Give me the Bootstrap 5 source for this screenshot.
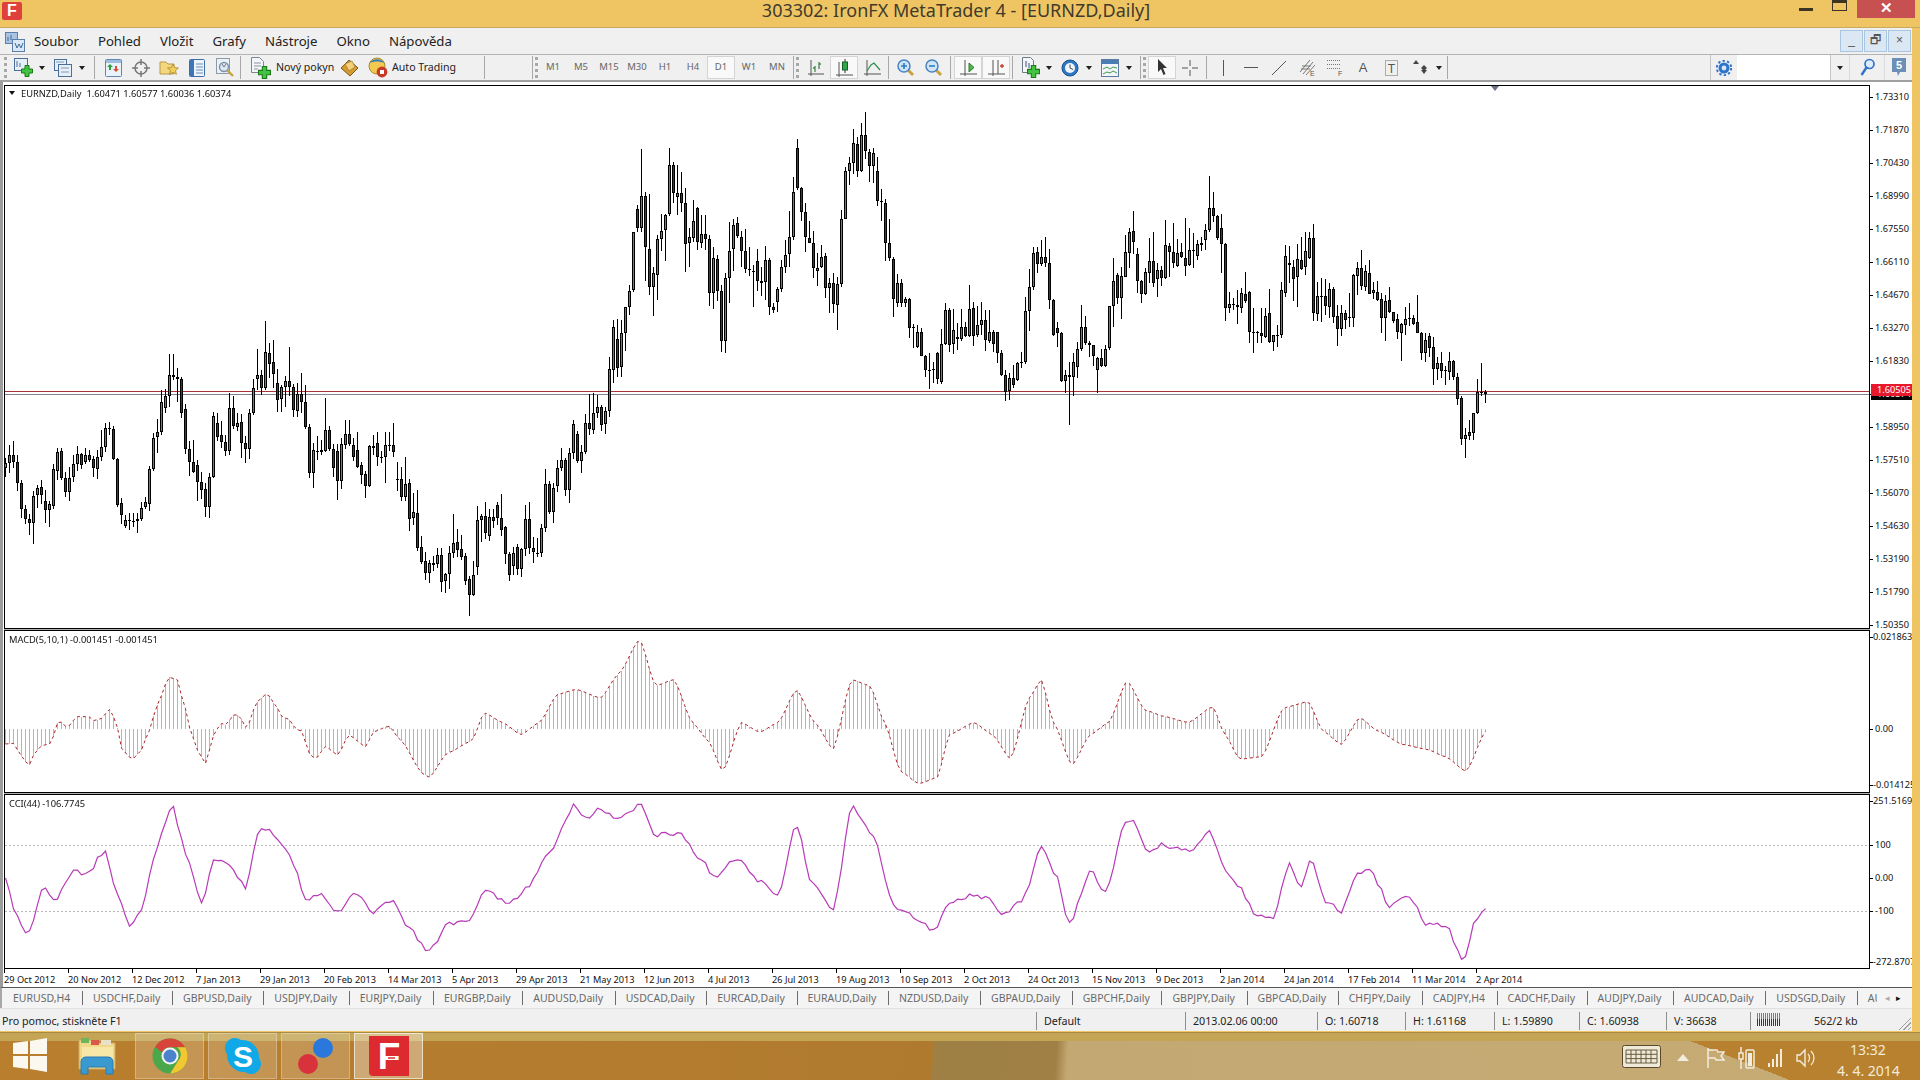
<!DOCTYPE html>
<html lang="cs">
<head>
  <meta charset="UTF-8">
  <title>303302: IronFX MetaTrader 4 - [EURNZD,Daily]</title>
  <link rel="stylesheet" href="https://cdn.jsdelivr.net/npm/bootstrap@5.3.0/dist/css/bootstrap.min.css">
  <style>
    html, body { width: 1920px; height: 1080px; overflow: hidden; }
    body { margin: 0; background: #efc564; font-family: "Noto Sans", "Liberation Sans", sans-serif; color: #222; position: relative; }
    .app { width: 1912px; }
    .ms-px { margin-left: 1px !important; }
    .ms-2px { margin-left: 2px !important; }
    .ms-3px { margin-left: 3px !important; }
    .ms-14 { margin-left: 14px !important; }
    .ms-47 { margin-left: 47px !important; }

    .titlebar { height: 28px; width: 1920px; background: #efc564; border-bottom: 1px solid #c9a860; }
    .title-text { font-size: 18px; line-height: 21px; color: #403a2c; width: 1912px; text-align: center; }
    .app-icon { width: 20px; height: 18px; left: 2px; top: 2px; background: #e0403c; border-radius: 2px; color: #fff; font: bold 16px/18px "Liberation Sans", sans-serif; text-align: center; }
    .win-btns { top: 0; right: 5px; }
    .win-min { width: 14px; height: 3px; background: #3d3424; margin: 8px 19px 0 0; }
    .win-max { width: 15px; height: 11px; border: 1.5px solid #3d3424; border-top-width: 3px; margin-right: 10px; }
    .win-close { width: 58px; height: 18px; background: #c75050; color: #fff; font: bold 15px/15px "Liberation Sans", sans-serif; text-align: center; }

    .menubar { height: 27px; background: #f0f0f0; border-bottom: 1px solid #b4b4b4; }
    .mdi-icon { margin: 0 9px 0 5px; }
    .menubar .nav-link { font-size: 13.2px; line-height: 26px; padding: 0; color: #222; }
    .menubar .nav-item { margin-right: 19px; }
    .mdi-btn { width: 23px; height: 22px; margin: 2px 1px 0 0; background: #dbe7f3; border: 1px solid #a9c5df; color: #555; font: 12px/19px "Liberation Sans", sans-serif; text-align: center; }

    .toolbar { height: 27px; background: #f0f0f0; border-bottom: 2px solid #a0a0a0; }
    .grip { width: 4px; height: 21px; margin: 2px 0 0; border-left: 3px dotted #a8a8a8; flex: none; }
    .sep { width: 1px; height: 23px; margin-top: 1px; background: #a8a8a8; flex: none; }
    .tb { width: 28px; height: 25px; flex: none; display: flex; align-items: center; justify-content: center; font-size: 9.5px; color: #666; }
    .tb.on { background: #f9f9f9; border: 1px solid #d4d4d4; height: 23px; margin-top: 1px; }
    .tb.w40 { width: 40px; justify-content: flex-start; padding-left: 4px; }
    .tb.w42 { width: 42px; justify-content: flex-start; padding-left: 7px; }
    .caret { width: 0; height: 0; border: 3px solid transparent; border-top: 4px solid #222; border-bottom: 0; margin-left: auto; margin-right: 5px; }
    .tb-text { font-size: 10.6px; color: #222; white-space: nowrap; }
    .tb.wo { width: 90px; justify-content: flex-start; padding-left: 5px; gap: 5px; }
    .tb.wa { width: 107px; justify-content: flex-start; padding-left: 5px; gap: 3px; }
    .tool-a { font: 13px "Liberation Sans", sans-serif; color: #555; }
    .search-group { margin-left: auto; }
    .gear { width: 27px; height: 25px; border-left: 1px solid #c4c4c4; display: flex; align-items: center; justify-content: center; }
    .search-group .form-control { width: 93px; height: 25px; padding: 0; border: 0; border-radius: 0; background: #fff; }
    .combo { width: 20px; height: 25px; border-left: 1px solid #c4c4c4; border-right: 1px solid #dcdcdc; display: flex; align-items: center; justify-content: center; }
    .combo .caret { margin: 0; }
    .ms-sb { width: 35px; height: 25px; display: flex; align-items: center; justify-content: center; border-right: 1px solid #dcdcdc; }
    .search-group .tb { width: 27px; }

    .chart-wrap { background: #fff; border-left: 3px solid #9c9c9c; padding-top: 3px; }
    .pane { margin-left: 1px; }
    .plot { width: 1866px; border: 1px solid #000; position: relative; flex: none; }
    .plot canvas { display: block; }
    .pane-gap { height: 1px; background: #b0b0b0; width: 1866px; margin-left: 1px; }
    .h-main { height: 544px; }
    .h-macd { height: 163px; }
    .h-cci { height: 175px; }
    .chart-label { position: absolute; left: 16px; top: 1px; font-size: 9.3px; line-height: 13px; white-space: pre; color: #111; }
    .chart-label.label-ind { left: 4px; top: 2px; }
    .chart-arrow { position: absolute; left: 4px; top: 5px; border: 3.5px solid transparent; border-top: 4px solid #111; border-bottom: 0; }
    .shift-mark { position: absolute; left: 1486px; top: 0; border: 4px solid transparent; border-top: 5px solid #6b7280; border-bottom: 0; }
    .axis { width: 42px; flex: none; font-size: 9.2px; line-height: 14px; color: #111; white-space: nowrap; overflow: hidden; position: relative; }
    .axis-main { padding-top: 5px; }
    .axis div { padding-left: 5px; background: linear-gradient(#000, #000) left 7px / 3px 1px no-repeat; }
    .axis .tight { padding-left: 3px; }
    .pl { height: 33px; }
    .r92 { height: 92px; } .r56 { height: 56px; }
    .r44 { height: 44px; } .r33 { height: 33px; } .r51 { height: 51px; } .r14 { height: 14px; }
    .price-tag { position: absolute; left: 1px; width: 41px; font-size: 9.2px; line-height: 12px; }
    .axis .tag-black { padding-left: 6px; top: 303px; height: 12px; background: #000; color: #fff; }
    .axis .tag-red { padding-left: 6px; top: 299px; height: 12px; line-height: 12px; background: #e8192c; color: #fff; }

    .dates { height: 18px; font-size: 9.2px; line-height: 17px; color: #111; padding-left: 1px; width: 1909px; }
    .dates span { width: 64px; flex: none; white-space: nowrap; padding-top: 2px; background: linear-gradient(#000, #000) left top / 1px 4px no-repeat; }

    .tabs { height: 21px; background: #f4f4f4; border-top: 1px solid #555; border-left: 2px solid #a8a8a8; overflow: hidden; }
    .tabs .nav-link { padding: 0 11.6px 0 10px; font-size: 10.5px; line-height: 14px; margin-top: 3px; color: #6a6a6a; border-left: 1px solid #6c6c6c; white-space: nowrap; }
    .tabs .nav-item:first-child .nav-link { border-left: 0; padding-left: 11px; }
    .nav-tabs-clip { width: 1875px; flex: none; flex-wrap: nowrap; overflow: hidden; }
    .tab-arrows { margin-left: 8px; flex: none; font-size: 9px; line-height: 19px; color: #aaa; }
    .tab-arrows b { color: #111; margin-left: 6px; font-weight: normal; }

    .statusbar { height: 23px; background: #f0f0f0; font-size: 10.7px; line-height: 23px; color: #222; border-top: 1px solid #e0e0e0; }
    .statusbar > div { padding-left: 7px; border-right: 1px solid #8e8e8e; height: 18px; line-height: 18px; margin-top: 3px; flex: none; white-space: nowrap; }
    .statusbar > .st1 { width: 1037px; padding-left: 2px; }
    .st2 { width: 149px; } .st3 { width: 132px; } .st4 { width: 88px; } .st5 { width: 89px; }
    .st6 { width: 85px; } .st7 { width: 87px; } .st8 { width: 84px; }
    .statusbar > .st9 { width: 160px; border-right: 0; position: relative; }
    .conn-bars { position: absolute; left: 6px; top: 1px; width: 24px; height: 13px; background: repeating-linear-gradient(90deg, transparent 0 1px, #f0f0f0 1px 2px), linear-gradient(#7f8f20 0 50%, #12407a 50%); }
    .mem { position: absolute; left: 63px; top: 0; }
    .grip-corner { position: absolute; right: 0; bottom: 0; width: 14px; height: 14px; background: repeating-linear-gradient(135deg, transparent 0 2px, #a0a0a0 2px 3px); clip-path: polygon(100% 0, 100% 100%, 0 100%); }

    .taskbar { position: absolute; left: 0; top: 1032px; width: 1920px; height: 48px;
      background:
        linear-gradient(#c4a455 0 8px, transparent 8px),
        linear-gradient(21.4deg, transparent 653px, #b8812f 653px),
        linear-gradient(94deg, #b97f2e 0, #b07a2e 48.6%, #9e7f44 48.6%, #a08044 55%, #c3a873 55.6%, #c7ab74 100%);
      border-top: 1px solid #a88a40; }
    .start { width: 62px; height: 47px; padding-left: 13px; padding-top: 5px; }
    .tbtn { width: 69px; height: 46px; margin-right: 4px; display: flex; align-items: center; justify-content: center; }
    .tbtn.open { background: rgba(255,255,255,.18); border: 1px solid rgba(255,255,255,.28); }
    .tbtn.active { background: rgba(255,255,255,.34); border: 1px solid rgba(255,255,255,.6); }
    .tray { margin-left: auto; height: 47px; }
    .kbd { margin-top: 12px; margin-left: 0; }
    .tray svg { display: block; flex: none; }
    .t-arrow { margin: 21px 0 0 16px; }
    .t-flag { margin: 15px 0 0 18px; }
    .t-power { margin: 14px 0 0 13px; }
    .t-signal { margin: 16px 0 0 12px; }
    .t-sound { margin: 15px 0 0 13px; }
    .clock { width: 62px; margin: 6px 21px 0 21px; text-align: center; color: #f4ecd8; font-size: 14px; line-height: 21px; white-space: nowrap; }
  </style>
</head>
<body>
  <svg width="0" height="0" class="position-absolute">
    <defs>
      <symbol id="plus" viewBox="0 0 12 12"><path d="M4 0.5h4v3.5h3.5v4H8v3.5H4V8H0.5V4H4z" fill="#43c243" stroke="#177a17"/></symbol>
      <symbol id="mag" viewBox="0 0 18 18"><path d="M11 11l5 5" stroke="#c9a23c" stroke-width="3"/><circle cx="7" cy="7" r="6" fill="#cfe6f8" stroke="#4a83bd" stroke-width="1.5"/></symbol>
    </defs>
  </svg>

  <div class="titlebar position-relative">
    <div class="app-icon position-absolute">F</div>
    <div class="title-text">303302: IronFX MetaTrader 4 - [EURNZD,Daily]</div>
    <div class="win-btns position-absolute d-flex">
      <div class="win-min"></div><div class="win-max"></div><div class="win-close">✕</div>
    </div>
  </div>

  <div class="app">
    <nav class="menubar d-flex align-items-start">
      <svg class="mdi-icon mt-1" width="20" height="20" viewBox="0 0 20 20"><rect x=".5" y=".5" width="12" height="11" fill="#a9c4e2" stroke="#5b7fa8"/><rect x="7.500" y="7.500" width="12" height="12" fill="#dbe8f6" stroke="#5b7fa8"/><path d="M3 5v4M6 3v5M10 11l2 5 2-4 2 4 2-5" fill="none" stroke="#3f6896"/></svg>
      <ul class="nav">
        <li class="nav-item"><a class="nav-link" href="#">Soubor</a></li>
        <li class="nav-item"><a class="nav-link" href="#">Pohled</a></li>
        <li class="nav-item"><a class="nav-link" href="#">Vložit</a></li>
        <li class="nav-item"><a class="nav-link" href="#">Grafy</a></li>
        <li class="nav-item"><a class="nav-link" href="#">Nástroje</a></li>
        <li class="nav-item"><a class="nav-link" href="#">Okno</a></li>
        <li class="nav-item"><a class="nav-link" href="#">Nápověda</a></li>
      </ul>
      <div class="ms-auto d-flex">
        <div class="mdi-btn">_</div><div class="mdi-btn">🗗</div><div class="mdi-btn">×</div>
      </div>
    </nav>

    <div class="toolbar d-flex">
      <div class="grip ms-1"></div>
      <div class="tb w40 ms-2px"><svg width="20" height="19" viewBox="0 0 20 19"><rect x=".5" y=".5" width="13" height="12" fill="#e6eff8" stroke="#4a6f9a"/><path d="M3 3v6M6 5v4" stroke="#4a6f9a"/><use href="#plus" x="7" y="7" width="12" height="12"/></svg><span class="caret"></span></div>
      <div class="tb w40"><svg width="18" height="18" viewBox="0 0 18 18"><rect x=".5" y=".5" width="12" height="11" fill="#e6eff8" stroke="#4a6f9a"/><rect x="4.500" y="5.500" width="13" height="12" fill="#e6eff8" stroke="#4a6f9a"/><path d="M7 9h8M7 13h8M2 3h8" stroke="#7f9abb"/></svg><span class="caret"></span></div>
      <div class="sep ms-1"></div>
      <div class="tb ms-1"><svg width="17" height="18" viewBox="0 0 17 18"><rect x=".5" y=".5" width="16" height="17" rx="1" fill="#eaf2fb" stroke="#5f86b3"/><rect x="1" y="1" width="15" height="3" fill="#9cbce0"/><path d="M5 5l3 3H6v3H4V8H2z" fill="#2e9e3e"/><path d="M11 13l-3-3h2V7h2v3h2z" fill="#d8502e"/></svg></div>
      <div class="tb"><svg width="18" height="18" viewBox="0 0 18 18"><circle cx="9" cy="9" r="6" fill="none" stroke="#777" stroke-width="1.500"/><path d="M9 0v6M9 12v6M0 9h6M12 9h6" stroke="#777" stroke-width="1.500"/></svg></div>
      <div class="tb"><svg width="20" height="18" viewBox="0 0 20 18"><path d="M1 3h6l2 2h6v10H1z" fill="#f3d77e" stroke="#b9974a"/><path d="M14 5l1.600 3.600 3.900.4-3 2.500.9 3.800-3.400-2-3.400 2 .9-3.800-3-2.500 3.900-.4z" fill="#f4cf55" stroke="#a8862f" stroke-width=".8"/></svg></div>
      <div class="tb"><svg width="16" height="18" viewBox="0 0 16 18"><rect x=".5" y=".5" width="15" height="17" rx="1" fill="#eef4fb" stroke="#3e6ea6"/><rect x="1" y="1" width="4" height="16" fill="#3f76b5"/><path d="M7 5h7M7 8h7M7 11h7M7 14h7" stroke="#6a8db6"/></svg></div>
      <div class="tb"><svg width="19" height="20" viewBox="0 0 19 20"><rect x=".5" y=".5" width="13" height="15" fill="#ecf1f6" stroke="#8a9bb0"/><circle cx="8" cy="9" r="4.500" fill="#dce8f4" stroke="#7f8fa6" stroke-width="1.400"/><path d="M11.500 12.500l5.500 5.500" stroke="#c9a23c" stroke-width="2.400"/><path d="M6 6l2 3 2-3" fill="none" stroke="#777"/></svg></div>
      <div class="sep ms-px"></div>
      <div class="tb wo ms-1"><svg width="21" height="23" viewBox="0 0 21 23"><path d="M1.500 1.500h8l4 4v11h-12z" fill="#f4f6f9" stroke="#7d8794"/><path d="M4 7h7M4 10h7M4 13h4" stroke="#8a94a3"/><use href="#plus" x="8" y="10" width="13" height="13"/></svg><span class="tb-text">Nový pokyn</span></div>
      <div class="tb"><svg width="19" height="19" viewBox="0 0 19 19"><path d="M1 10L9 2l9 8-8 8z" fill="#d49a2e" stroke="#7a5a22"/><path d="M5 6l7-3 3 6-6 4z" fill="#f2cf78" stroke="#9b7a33" stroke-width=".7"/></svg></div>
      <div class="tb wa"><svg width="21" height="21" viewBox="0 0 21 21"><circle cx="9" cy="9" r="8" fill="#f2c94f" stroke="#a98a2d"/><path d="M2 6c2-5 12-5 14 0-4-2-10-2-14 0z" fill="#3a7cc0"/><circle cx="14" cy="15" r="5.400" fill="#c83a24"/><rect x="12" y="13" width="4" height="4" fill="#fff"/></svg><span class="tb-text">Auto Trading</span></div>
      <div class="sep ms-14"></div>
      <div class="sep ms-47"></div>
      <div class="grip ms-2px"></div>
      <div class="tb">M1</div><div class="tb">M5</div><div class="tb">M15</div><div class="tb">M30</div><div class="tb">H1</div><div class="tb">H4</div><div class="tb on">D1</div><div class="tb">W1</div><div class="tb">MN</div>
      <div class="sep ms-2px"></div>
      <div class="grip ms-2px"></div>
      <div class="tb ms-2px"><svg width="16" height="16" viewBox="0 0 16 16"><path d="M0 14h16M3 0v16" stroke="#555"/><path d="M7 12V6M7 8H5M11 9V2M11 4h2" stroke="#3f8a4a" stroke-width="1.300"/></svg></div>
      <div class="tb on"><svg width="17" height="18" viewBox="0 0 17 18"><path d="M0 16h17M3 3v15" stroke="#555"/><path d="M9 0v14" stroke="#333"/><rect x="6.500" y="3" width="5" height="8" fill="#2fa84a" stroke="#1b5e28"/></svg></div>
      <div class="tb"><svg width="17" height="16" viewBox="0 0 17 16"><path d="M0 14h17M3 0v16" stroke="#555"/><path d="M3 11l4-6 3-2 6 7" fill="none" stroke="#2f8f4a" stroke-width="1.200"/></svg></div>
      <div class="sep ms-2px"></div>
      <div class="tb ms-3px"><svg width="18" height="18" viewBox="0 0 18 18"><use href="#mag" width="18" height="18"/><path d="M4 7h6M7 4v6" stroke="#2f7cc4" stroke-width="1.600"/></svg></div>
      <div class="tb"><svg width="18" height="18" viewBox="0 0 18 18"><use href="#mag" width="18" height="18"/><path d="M4 7h6" stroke="#2f7cc4" stroke-width="1.600"/></svg></div>
      <div class="sep ms-2px"></div>
      <div class="tb on ms-3px"><svg width="17" height="16" viewBox="0 0 17 16"><path d="M0 14h17M5 0v16" stroke="#555"/><path d="M9 3l5 4.500L9 12z" fill="#4fb84f" stroke="#2d7a2d"/></svg></div>
      <div class="tb on"><svg width="17" height="16" viewBox="0 0 17 16"><path d="M0 14h17M5 0v16M10 0v14" stroke="#555"/><path d="M12 6h4M14 4v4" stroke="#c8402c" stroke-width="1.400"/></svg></div>
      <div class="sep ms-2px"></div>
      <div class="tb w40 ms-1"><svg width="20" height="22" viewBox="0 0 20 22"><path d="M1.500 .5h8l3 3v12h-11z" fill="#f4f6f9" stroke="#6f7b88"/><path d="M5 4v6M8 6v5" stroke="#33507a"/><use href="#plus" x="6" y="8" width="13" height="13"/></svg><span class="caret"></span></div>
      <div class="tb w40"><svg width="18" height="18" viewBox="0 0 18 18"><circle cx="9" cy="9" r="8" fill="#2e79c4" stroke="#174e8c"/><circle cx="9" cy="9" r="5" fill="#f1f5fa"/><path d="M9 5.500V9l3 1.500" fill="none" stroke="#444"/></svg><span class="caret"></span></div>
      <div class="tb w40"><svg width="18" height="18" viewBox="0 0 18 18"><rect x=".5" y=".5" width="17" height="17" fill="#f2f6fa" stroke="#5b7a9e"/><rect x="1" y="1" width="16" height="4" fill="#4a7db5"/><path d="M2 10l4-2 3 2 3-2 4 1M2 15l4-2 3 1 3-2 4 2" fill="none" stroke="#46984e"/></svg><span class="caret"></span></div>
      <div class="sep ms-3px"></div>
      <div class="grip ms-2px"></div>
      <div class="tb on ms-px"><svg width="11" height="17" viewBox="0 0 11 17"><path d="M1 0l9 9H6l2.500 6-2 1L4 10l-3 3z" fill="#333"/></svg></div>
      <div class="tb"><svg width="16" height="16" viewBox="0 0 16 16"><path d="M8 0v6M8 10v6M0 8h6M10 8h6" stroke="#555"/></svg></div>
      <div class="sep ms-2px"></div>
      <div class="tb ms-2px"><svg width="3" height="16" viewBox="0 0 3 16"><path d="M1.500 0v16" stroke="#555"/></svg></div>
      <div class="tb"><svg width="14" height="3" viewBox="0 0 14 3"><path d="M0 1.500h14" stroke="#555"/></svg></div>
      <div class="tb"><svg width="14" height="14" viewBox="0 0 14 14"><path d="M0 14L14 0" stroke="#555"/></svg></div>
      <div class="tb"><svg width="17" height="18" viewBox="0 0 17 18"><path d="M1 13L11 1M4 15L14 3M7 16L16 6M3 7h9M2 10h9" stroke="#777"/><text x="11" y="17" font-size="7" fill="#555" font-family="Liberation Sans">E</text></svg></div>
      <div class="tb"><svg width="17" height="18" viewBox="0 0 17 18"><path d="M0 1.500h14M0 5.500h14M0 9.500h14" stroke="#777" stroke-dasharray="1 1"/><text x="11" y="17" font-size="7" fill="#555" font-family="Liberation Sans">F</text></svg></div>
      <div class="tb"><span class="tool-a">A</span></div>
      <div class="tb"><svg width="13" height="16" viewBox="0 0 13 16"><rect x=".5" y=".5" width="12" height="15" fill="none" stroke="#666" stroke-dasharray="1 1"/><text x="6.500" y="12.500" text-anchor="middle" font-size="12" fill="#555" font-family="Liberation Sans">T</text></svg></div>
      <div class="tb w42"><svg width="16" height="16" viewBox="0 0 16 16"><path d="M4 0l3 4H1zM12 14l-3-4h6zM12 5l3 3-3 3-3-3z" fill="#444"/></svg><span class="caret"></span></div>
      <div class="sep"></div>
      <div class="search-group d-flex">
        <div class="gear"><svg width="16" height="16" viewBox="0 0 16 16"><circle cx="8" cy="8" r="5.500" fill="#2f74c8"/><circle cx="8" cy="8" r="7.200" fill="none" stroke="#2f74c8" stroke-width="2" stroke-dasharray="2.400 2.200"/><circle cx="8" cy="8" r="2.400" fill="#d8e8f8"/></svg></div>
        <input class="form-control" type="text">
        <div class="combo"><span class="caret"></span></div>
        <div class="ms-sb"><svg width="15" height="19" viewBox="0 0 15 19"><circle cx="9.500" cy="6" r="4.500" fill="#dcecfa" stroke="#2f74c8" stroke-width="1.700"/><path d="M6.500 9.500L1.500 17" stroke="#2f74c8" stroke-width="2.400"/></svg></div>
        <div class="tb"><svg width="16" height="19" viewBox="0 0 16 19"><path d="M1 0h14v14H9l-2 4-1-4H1z" fill="#6d8fb5"/><text x="8" y="11" text-anchor="middle" font-size="11" font-weight="bold" fill="#fff" font-family="Liberation Sans">5</text></svg></div>
      </div>
    </div>

    <div class="chart-wrap">
      <div class="pane d-flex h-main">
        <div class="plot h-main">
          <canvas id="mainChart" width="1864" height="542"></canvas>
          <span class="chart-arrow"></span>
          <span class="chart-label">EURNZD,Daily  1.60471 1.60577 1.60036 1.60374</span>
          <span class="shift-mark"></span>
        </div>
        <div class="axis axis-main">
          <div class="pl">1.73310</div><div class="pl">1.71870</div><div class="pl">1.70430</div><div class="pl">1.68990</div><div class="pl">1.67550</div><div class="pl">1.66110</div><div class="pl">1.64670</div><div class="pl">1.63270</div><div class="pl">1.61830</div><div class="pl"></div><div class="pl">1.58950</div><div class="pl">1.57510</div><div class="pl">1.56070</div><div class="pl">1.54630</div><div class="pl">1.53190</div><div class="pl">1.51790</div><div class="pl">1.50350</div>
          <div class="price-tag tag-black">1.60374</div>
          <div class="price-tag tag-red">1.60505</div>
        </div>
      </div>
      <div class="pane-gap"></div>
      <div class="pane d-flex h-macd">
        <div class="plot h-macd">
          <canvas id="macdChart" width="1864" height="161"></canvas>
          <span class="chart-label label-ind">MACD(5,10,1) -0.001451 -0.001451</span>
        </div>
        <div class="axis">
          <div class="r92 tight">0.021863</div><div class="r56">0.00</div><div class="r14 tight">-0.014125</div>
        </div>
      </div>
      <div class="pane-gap"></div>
      <div class="pane d-flex h-cci">
        <div class="plot h-cci">
          <canvas id="cciChart" width="1864" height="173"></canvas>
          <span class="chart-label label-ind">CCI(44) -106.7745</span>
        </div>
        <div class="axis">
          <div class="r44 tight">251.5169</div><div class="r33">100</div><div class="r33">0.00</div><div class="r51">-100</div><div class="r14 tight">-272.8707</div>
        </div>
      </div>
      <div class="dates d-flex">
        <span>29 Oct 2012</span><span>20 Nov 2012</span><span>12 Dec 2012</span><span>7 Jan 2013</span><span>29 Jan 2013</span><span>20 Feb 2013</span><span>14 Mar 2013</span><span>5 Apr 2013</span><span>29 Apr 2013</span><span>21 May 2013</span><span>12 Jun 2013</span><span>4 Jul 2013</span><span>26 Jul 2013</span><span>19 Aug 2013</span><span>10 Sep 2013</span><span>2 Oct 2013</span><span>24 Oct 2013</span><span>15 Nov 2013</span><span>9 Dec 2013</span><span>2 Jan 2014</span><span>24 Jan 2014</span><span>17 Feb 2014</span><span>11 Mar 2014</span><span>2 Apr 2014</span>
      </div>
    </div>

    <div class="tabs d-flex">
      <ul class="nav nav-tabs-clip">
        <li class="nav-item"><a class="nav-link" href="#">EURUSD,H4</a></li>
        <li class="nav-item"><a class="nav-link" href="#">USDCHF,Daily</a></li>
        <li class="nav-item"><a class="nav-link" href="#">GBPUSD,Daily</a></li>
        <li class="nav-item"><a class="nav-link" href="#">USDJPY,Daily</a></li>
        <li class="nav-item"><a class="nav-link" href="#">EURJPY,Daily</a></li>
        <li class="nav-item"><a class="nav-link" href="#">EURGBP,Daily</a></li>
        <li class="nav-item"><a class="nav-link" href="#">AUDUSD,Daily</a></li>
        <li class="nav-item"><a class="nav-link" href="#">USDCAD,Daily</a></li>
        <li class="nav-item"><a class="nav-link" href="#">EURCAD,Daily</a></li>
        <li class="nav-item"><a class="nav-link" href="#">EURAUD,Daily</a></li>
        <li class="nav-item"><a class="nav-link" href="#">NZDUSD,Daily</a></li>
        <li class="nav-item"><a class="nav-link" href="#">GBPAUD,Daily</a></li>
        <li class="nav-item"><a class="nav-link" href="#">GBPCHF,Daily</a></li>
        <li class="nav-item"><a class="nav-link" href="#">GBPJPY,Daily</a></li>
        <li class="nav-item"><a class="nav-link" href="#">GBPCAD,Daily</a></li>
        <li class="nav-item"><a class="nav-link" href="#">CHFJPY,Daily</a></li>
        <li class="nav-item"><a class="nav-link" href="#">CADJPY,H4</a></li>
        <li class="nav-item"><a class="nav-link" href="#">CADCHF,Daily</a></li>
        <li class="nav-item"><a class="nav-link" href="#">AUDJPY,Daily</a></li>
        <li class="nav-item"><a class="nav-link" href="#">AUDCAD,Daily</a></li>
        <li class="nav-item"><a class="nav-link" href="#">USDSGD,Daily</a></li>
        <li class="nav-item"><a class="nav-link" href="#">AUDCHF,Daily</a></li>
      </ul>
      <div class="tab-arrows">◂<b>▸</b></div>
    </div>

    <div class="statusbar d-flex">
      <div class="st1">Pro pomoc, stiskněte F1</div>
      <div class="st2">Default</div>
      <div class="st3">2013.02.06 00:00</div>
      <div class="st4">O: 1.60718</div>
      <div class="st5">H: 1.61168</div>
      <div class="st6">L: 1.59890</div>
      <div class="st7">C: 1.60938</div>
      <div class="st8">V: 36638</div>
      <div class="st9"><span class="conn-bars"></span><span class="mem">562/2 kb</span><span class="grip-corner"></span></div>
    </div>
  </div>

  <div class="taskbar d-flex">
    <div class="start"><svg width="34" height="34" viewBox="0 0 34 34"><path d="M0 5l15-2v13H0zM17 3l17-3v16H17zM0 18h15v13L0 29zM17 18h17v16l-17-3z" fill="#fbf8f0"/></svg></div>
    <div class="tbtn"><svg width="40" height="40" viewBox="0 0 40 40"><path d="M2 4h12l3 3h21v26H2z" fill="#f2d98a" stroke="#c8a860"/><path d="M4 2h8v5H4z" fill="#6fb35a"/><path d="M14 4h8v5h-8z" fill="#d85a4a"/><path d="M24 4h10v5H24z" fill="#e8e0c8"/><path d="M5 11h31v20H5z" fill="#f8e8a8"/><path d="M4 38V26c0-3 2-5 5-5h22c3 0 5 2 5 5v12h-7v-7H11v7z" fill="#3a9ad0" stroke="#2a7ab0"/></svg></div>
    <div class="tbtn open"><svg width="36" height="36" viewBox="0 0 36 36"><circle cx="18" cy="18" r="17.500" fill="#4aa84a"/><path d="M18 .5a17.500 17.500 0 0 1 15.200 8.800H18a8.800 8.800 0 0 0-8 5L3.200 8.800A17.500 17.500 0 0 1 18 .5z" fill="#d8443a"/><path d="M33.200 9.300a17.500 17.500 0 0 1-15 26.200L26 23a8.800 8.800 0 0 0-1-13.700z" fill="#f2c832"/><circle cx="18" cy="18" r="8.500" fill="#f4f4f4"/><circle cx="18" cy="18" r="6.500" fill="#4a82cc"/></svg></div>
    <div class="tbtn open"><svg width="38" height="38" viewBox="0 0 38 38"><path d="M11 1a10 10 0 0 1 6 2 17 17 0 0 1 18 18 10 10 0 0 1-14 14A17 17 0 0 1 3 17 10 10 0 0 1 11 1z" fill="#10a8e6"/><text x="19" y="30" text-anchor="middle" font-size="30" font-weight="bold" fill="#fff" font-family="Liberation Sans">S</text></svg></div>
    <div class="tbtn open"><svg width="36" height="36" viewBox="0 0 36 36"><circle cx="25" cy="10" r="10" fill="#2a78dc"/><circle cx="10" cy="26" r="10" fill="#d8323c"/></svg></div>
    <div class="tbtn active"><svg width="40" height="40" viewBox="0 0 40 40"><path d="M0 0h40v40H4a4 4 0 0 1-4-4z" fill="#dc2a30"/><text x="20" y="33" text-anchor="middle" font-size="37" font-weight="bold" fill="#fff" font-family="Liberation Sans">F</text><path d="M22 14h8M26 22h-7" stroke="#dc2a30" stroke-width="1.500"/></svg></div>
    <div class="tray d-flex">
      <svg class="kbd" width="39" height="23" viewBox="0 0 39 23"><rect x=".5" y=".5" width="38" height="22" rx="2" fill="#efe9da" stroke="#5a4a2a"/><path d="M4 5h31v13H4zM4 9.300h31M4 13.600h31M9 5v13M14 5v13M19 5v13M24 5v13M29 5v13" fill="none" stroke="#6a5a3a"/></svg>
      <svg class="t-arrow" width="12" height="7" viewBox="0 0 12 7"><path d="M6 0l6 7H0z" fill="#f2ecdc"/></svg>
      <svg class="t-flag" width="18" height="20" viewBox="0 0 18 20"><path d="M1 0v20M1 2h9l1 2h6l-3 4 3 4H9l-1-2H1" fill="none" stroke="#f2ecdc" stroke-width="1.500"/></svg>
      <svg class="t-power" width="17" height="22" viewBox="0 0 17 22"><path d="M3 0v6M1 6h4v6H1zM3 12v10" stroke="#f2ecdc" stroke-width="1.500" fill="none"/><rect x="8" y="3" width="8" height="18" rx="1" fill="none" stroke="#f2ecdc" stroke-width="1.500"/><rect x="10" y="6" width="4" height="13" fill="#f2ecdc"/></svg>
      <svg class="t-signal" width="16" height="18" viewBox="0 0 16 18"><path d="M1 14h2v4H1zM5 10h2v8H5zM9 5h2v13H9zM13 0h2v18h-2z" fill="#f2ecdc"/></svg>
      <svg class="t-sound" width="20" height="20" viewBox="0 0 20 20"><path d="M1 7h3l5-5v16l-5-5H1z" fill="none" stroke="#f2ecdc" stroke-width="1.400"/><path d="M12 6c2 2 2 6 0 8M15 3c4 4 4 10 0 14" fill="none" stroke="#f2ecdc" stroke-width="1.300"/></svg>
      <div class="clock">13:32<br>4. 4. 2014</div>
    </div>
  </div>

  <script>
    // body top, body bottom, colour, wick top, wick bottom (in crop pixels, 3x)
    const segA = `490,505,g,,530 465,490,g,435,518 465,485,r,423, 485,548,r,465,572 548,628,r,,655 628,658,r,615,672 658,668,r,,705 588,668,g,,733 565,585,g,555,625 562,585,r,540,612 604,630,r,570,668 612,630,g,,680 508,618,g,493,628 457,512,g,445,540 453,535,r,445,540 535,575,r,,590 535,575,g,500,602 493,532,g,465, 463,492,g,438, 463,494,r,,508 465,485,g,, 465,480,r,450, 478,505,r,,532 472,508,g,,538 442,472,g,390,482 385,440,g,368, 385,388,r,367, 388,476,r,378,480 478,614,r,,622 610,644,r,595,672 660,678,g,645,685 660,663,r,638,690 663,665,r,640,682 656,663,g,640,698 625,656,g,605,662 606,620,g,,628 508,612,g,, 415,508,g,,512 397,410,g,358,458 307,397,g,270,405 288,325,g,268,340 226,287,g,163,320 226,230,r,163, 232,236,r,205,305 238,338,r,,355 328,448,r,,462 448,485,r,422,527 485,515,r,420,520 495,545,r,,603 545,570,r,515,598 567,620,r,,650 530,620,g,,653 348,530,g,335,535 370,410,r,338, 405,425,r,362, 425,452,r,,468 325,452,g,280,465 325,378,r,288,388 370,380,g,340, 366,428,r,,473 428,448,r,,488 340,448,g,,478 265,340,g,238,345 226,236,g,148,270 224,265,r,210,285 157,265,g,63,270 160,192,r,130,235 187,223,r,120,265 250,300,r,208,335 262,298,g,,335 244,260,g,228,320 244,260,r,140,288 260,330,r,,350 283,332,g,250, 283,307,r,220,340 307,382,r,255,388 382,518,r,372,535 450,518,g,430,563 452,457,r,408,480 449,457,g,420, 390,452,g,295,455 390,447,r,, 447,505,r,432,532 453,542,r,,600 433,542,g,415,567 403,434,g,360, 403,433,r,360, 435,472,r,,482 450,500,r,395,505 495,524,r,,552 522,558,r,512,593 438,558,g,,560 438,445,r,405, 430,470,r,395,497 470,473,r,,490 435,470,g,395,548 436,438,r,395, 436,455,r,370,472 538,540,g,487,572 538,590,r,500,602 552,590,g,472,602 550,656,r,538,692 637,655,g,580, 640,744,r,570,752 742,786,r,708, 784,818,r,755,840 790,818,g,,850 790,795,r,,812 764,793,g,745, 764,847,r,,875 822,842,g,818,878 760,823,g,,868 728,760,g,643, 725,750,r,687, 748,770,r,705, 768,842,r,760,855 838,884,r,828,947 826,884,g,783,888 660,800,g,618,825 649,660,g,,725 649,700,r,605, 652,708,g,628,722 652,662,r,628, 615,655,r,605, 655,690,r,583, 682,762,r,,792 762,825,r,,842 760,797,g,740,825 740,808,r,732,825 748,806,g,745,830 658,748,g,615, 658,745,r,607, 745,756,r,712,790 758,762,r,715,770 685,760,g,,770 553,685,g,508,695 553,635,r,542, 565,635,g,,670 505,557,g,480, 480,505,g,445, 480,570,r,, 460,570,g,,608 373,458,g,360, 403,482,r,393,488 455,482,g,,518 370,455,g,342,462 370,388,r,282,405 340,390,g,278, 320,340,g,285, 320,375,r,314, 332,372,g,,403 208,332,g,172,350 80,210,g,60,248 118,203,r,58,230`;
    const segB = `700,802,g,660,830 622,700,g,642,752 572,622,g,555,645 397,570,g,488,575 328,385,r,315,395 287,385,g,148,395 287,442,r,275,542 448,562,r,283,585 520,562,g,500,648 418,526,g,405,600 392,418,g,343,452 344,390,g,342,483 196,342,g,145,348 196,280,r,185,308 280,290,g,195,345 280,310,r,217,335 310,433,r,265,515 412,430,g,385,500 364,415,g,300,425 324,425,r,320,450 403,428,g,345,445 403,418,r,345,450 418,580,r,405,618 475,580,g,440,628 478,574,r,465,602 574,724,r,555,755 535,724,g,520,758 452,535,g,365,610 376,448,g,357,512 370,408,r,350,415 412,452,r,392,500 452,508,r,388,520 508,510,r,440,528 512,517,r,495,620 484,542,r,448,572 542,548,r,500,587 481,547,g,438,600 481,622,r,475,645 622,630,r,610,638 566,607,g,562,637 500,568,g,480,575 464,500,g,420,518 412,462,g,333,500 275,412,g,232,420 145,265,r,118,270 265,337,r,262,362 335,412,r,310,455 415,428,r,363,430 428,505,r,392,533 503,514,g,460,558 472,502,g,435,505 469,565,r,460,595 550,565,g,533,638 550,612,r,520,640 552,616,g,530,690 356,552,g,330,562 214,356,g,200,358 190,214,g,170,255 128,190,g,87,222 133,212,r,110,232 106,212,g,70,215 106,154,r,37,178 155,198,r,148,245 160,198,g,145,250 214,304,r,172,318 304,307,r,268,362 308,430,r,298,482 430,475,r,358,482 476,596,r,470,650 550,610,g,522,622 550,610,r,538,622 598,610,g,590,622 598,683,r,595,715 680,682,r,672,745 697,742,g,675,745 697,767,r,685,768 768,811,r,765,832 810,812,r,758,866 808,811,r,785,850 760,838,r,755,852 733,847,g,688,852 630,733,g,608,735 630,735,r,625,755 690,733,g,628,762 710,718,r,670,750 680,718,g,628,722 682,708,r,665,712 628,708,g,555,710 625,708,r,605,738 676,706,g,618,712 660,676,g,605,705 660,720,r,630,752 697,722,g,630,730 697,733,r,690,755 697,760,r,695,788 760,826,r,750,828 826,875,r,810,902 835,872,g,820,900 835,856,r,795,865 790,840,g,785,842 786,790,r,755,805 634,786,g,592,792 560,634,g,508,692 458,560,g,442,570 456,492,r,440,518 472,492,g,420,498 472,490,r,410,500 490,600,r,448,628 600,704,r,598,708 685,700,r,665,742 700,842,r,696,845 826,842,g,810,878 826,832,r,785,975 785,832,g,760,887 748,802,g,725,835 680,748,g,615,752 682,730,r,648,735 730,736,r,722,770 736,768,r,734,798 774,810,g,770,878`;
    const segC = `595,617,r,568,622 568,617,g,555,622 438,565,g,515,570 364,438,g,295,500 346,415,r,340,432 348,415,g,322,477 277,350,g,225,352 216,280,g,205,325 214,245,r,153,282 283,362,r,265,398 364,403,r,360,428 336,403,g,325,405 304,338,g,235,370 304,368,r,215,380 330,358,g,308,410 330,355,r,318,378 256,355,g,180,357 259,275,r,250,350 275,310,r,188,325 280,317,g,237,320 277,292,r,250,295 295,317,r,175,348 271,316,g,205,318 270,272,r,218,323 253,287,g,240,300 250,254,r,232,272 211,239,g,192,270 145,211,g,48,215 145,167,r,97,185 169,235,r,165,240 205,253,r,162,338 253,445,r,250,482 432,443,g,395,458 433,435,r,415,450 436,442,r,390,492 400,445,g,385,460 403,422,r,337,428 396,517,r,392,548 516,518,r,445,580 516,518,r,513,548 520,529,r,445,550 469,530,g,443,533 460,545,r,388,548 526,547,g,525,572 525,527,r,495,560 391,526,g,367,535 289,400,g,255,410 310,316,r,258,370 320,356,r,300,422 298,352,g,252,440 300,326,r,232,330 274,322,g,217,345 235,295,g,215,298 235,460,r,193,482 409,463,g,367,482 408,410,r,355,485 408,437,r,357,465 388,440,g,370,475 388,470,r,380,488 469,506,r,435,557 460,506,g,435,527 460,479,r,450,508 471,473,r,400,500 346,475,g,342,500 325,347,g,305,405 325,377,r,270,390 334,380,g,315,392 340,401,r,300,402 391,400,g,365,418 395,419,r,363,422 418,473,r,400,518 424,473,g,405,542 421,457,r,382,460 457,483,r,455,490 478,517,r,462,537 492,518,g,488,602 478,494,g,440,525 475,477,r,430,497 475,491,r,465,495 487,518,r,405,520 518,578,r,515,600 541,578,g,520,605 529,563,r,520,590 562,626,r,530,675 610,626,g,590,660 610,632,r,575,655 629,632,r,618,675 604,635,g,575,660 603,650,r,600,660 650,716,r,640,735 714,837,r,708,855 825,838,g,804,895 816,827,r,780,840 760,818,g,760,840 697,760,g,657,762 697,699,r,610,708 695,703,r,690,728`;

    let seed = 7;
    function rnd(a, b) {
      seed = (seed * 16807) % 2147483647;
      return a + (seed % 1000) / 1000 * (b - a);
    }

    function parseCandles(str, top) {
      return str.split(/\s+/).map(rec => {
        const [t, b, col, h, l] = rec.split(",");
        return {
          top: Math.round(top + t / 3),
          bottom: Math.round(top + b / 3),
          up: col === "g",
          high: Math.round(top + (h !== "" ? +h : +t - rnd(3, 24)) / 3),
          low: Math.round(top + (l !== "" && l !== undefined ? +l : +b + rnd(3, 24)) / 3)
        };
      });
    }
    const candles = [...parseCandles(segA, 300), ...parseCandles(segB, 100), ...parseCandles(segC, 160)];

    // main chart: canvas origin is (5, 86) on the screen
    const ctx = document.getElementById("mainChart").getContext("2d");
    ctx.fillStyle = "#a83236"; ctx.fillRect(0, 391 - 86, 1864, 1);
    ctx.fillStyle = "#7d8494"; ctx.fillRect(0, 394 - 86, 1864, 1);
    candles.forEach((c, i) => {
      const x = 4 * i;
      ctx.fillStyle = "#000";
      ctx.fillRect(x, c.high - 86, 1, c.low - c.high);
      ctx.fillRect(x - 1, c.top - 86, 3, Math.max(c.bottom - c.top, 1));
      if (c.bottom - c.top > 2) {
        ctx.fillStyle = c.up ? "#2ea84c" : "#8c1a20";
        ctx.fillRect(x, c.top - 85, 1, c.bottom - c.top - 2);
      }
    });

    // interpolate [screen x, screen y] key points to one value per bar
    function perBar(points) {
      const out = [];
      for (let i = 0; i <= 370; i++) {
        const x = 5 + 4 * i;
        let k = 0;
        while (k < points.length - 2 && points[k + 1][0] < x) k++;
        const [x0, y0] = points[k], [x1, y1] = points[k + 1];
        const t = Math.min(1, Math.max(0, (x - x0) / (x1 - x0)));
        const s = t * t * (3 - 2 * t);
        out.push(y0 + (y1 - y0) * (0.5 * t + 0.5 * s));
      }
      return out;
    }
    const disp = p => p.map(([x, y]) => [x * 1.2245, y * 1.2245]);

    // MACD: first part read from a 3x crop, the rest from the full picture
    const macdPts = [[14,372],[40,370],[60,405],[85,437],[105,395],[125,376],[150,372],[175,300],[200,322],[230,290],[265,290],[280,302],[300,297],[328,268],[345,300],[365,390],[395,418],[420,395],[445,335],[470,255],[505,172],[530,178],[550,250],[570,330],[590,390],[615,430],[640,345],[660,310],[680,315],[695,285],[715,285],[738,325],[770,245],[800,220],[825,255],[845,290],[870,300],[885,328],[905,333],[925,400],[945,417],[975,380],[1012,405],[1045,345],[1095,380],[1120,335],[1165,318],[1200,360]]
      .map(([x, y]) => [x / 3, 620 + y / 3])
      .concat(disp([[345,632],[350,635],[365,615],[385,605],[395,582],[410,590],[425,600],[440,590],[455,567],[470,563],[490,570],[505,550],[522,522],[535,560],[550,555],[565,590],[578,605],[590,630],[605,590],[620,598],[635,590],[650,563],[665,590],[680,612],[695,555],[710,560],[722,590],[735,630],[750,640],[765,635],[775,600],[795,590],[810,600],[825,620],[840,570],[850,555],[860,590],[875,625],[890,600],[905,590],[920,556],[935,580],[950,585],[970,590],[990,577],[1000,600],[1012,620],[1030,618],[1048,578],[1068,573],[1080,597],[1095,608],[1110,586],[1125,597],[1145,608],[1165,612],[1180,618],[1197,630],[1213,597]]));
    const macd = perBar(macdPts);
    const mctx = document.getElementById("macdChart").getContext("2d");
    const zero = 729 - 631;
    macd.forEach((y, i) => {
      const yy = Math.round(y - 631);
      mctx.fillStyle = "#b6b6b6";
      mctx.fillRect(4 * i, Math.min(zero, yy), 1, Math.abs(yy - zero));
    });
    mctx.strokeStyle = "#a8242a";
    mctx.lineWidth = 1;
    mctx.setLineDash([3, 3]);
    mctx.beginPath();
    macd.forEach((y, i) => i ? mctx.lineTo(4 * i + .5, y - 631) : mctx.moveTo(.5, y - 631));
    mctx.stroke();

    // CCI
    const cciPts = disp([[4,715],[12,745],[22,765],[35,725],[45,735],[60,710],[70,715],[85,695],[95,730],[105,755],[115,745],[125,700],[140,657],[152,700],[165,737],[175,700],[190,710],[200,725],[212,675],[222,680],[235,695],[250,735],[262,730],[275,745],[290,728],[305,745],[320,735],[335,760],[350,778],[365,755],[385,750],[395,725],[415,738],[430,725],[450,695],[468,658],[480,670],[490,660],[505,670],[522,657],[535,682],[555,680],[570,700],[585,718],[600,700],[620,720],[635,732],[650,672],[662,720],[680,745],[695,658],[712,680],[730,740],[750,750],[762,760],[775,738],[790,732],[805,733],[820,747],[835,735],[850,690],[862,715],[873,755],[890,710],[903,730],[918,670],[925,668],[935,695],[950,690],[970,695],[988,680],[1000,710],[1012,725],[1025,748],[1040,750],[1052,705],[1062,725],[1070,700],[1082,735],[1095,745],[1108,712],[1118,710],[1135,740],[1150,730],[1165,755],[1180,755],[1195,785],[1203,755],[1210,743]]);
    const cci = perBar(cciPts);
    const cctx = document.getElementById("cciChart").getContext("2d");
    cctx.strokeStyle = "#b9b9b9";
    cctx.setLineDash([2, 2]);
    [845, 911].forEach(y => { cctx.beginPath(); cctx.moveTo(0, y - 795 + .5); cctx.lineTo(1864, y - 795 + .5); cctx.stroke(); });
    cctx.setLineDash([]);
    cctx.strokeStyle = "#b83ab8";
    cctx.lineWidth = 1.2;
    cctx.beginPath();
    cci.forEach((y, i) => {
      const yy = y - 795 + rnd(-2.6, 2.6);
      i ? cctx.lineTo(4 * i + .5, yy) : cctx.moveTo(.5, yy);
    });
    cctx.stroke();
  </script>
  <script src="https://cdn.jsdelivr.net/npm/bootstrap@5.3.0/dist/js/bootstrap.bundle.min.js"></script>
</body>
</html>
